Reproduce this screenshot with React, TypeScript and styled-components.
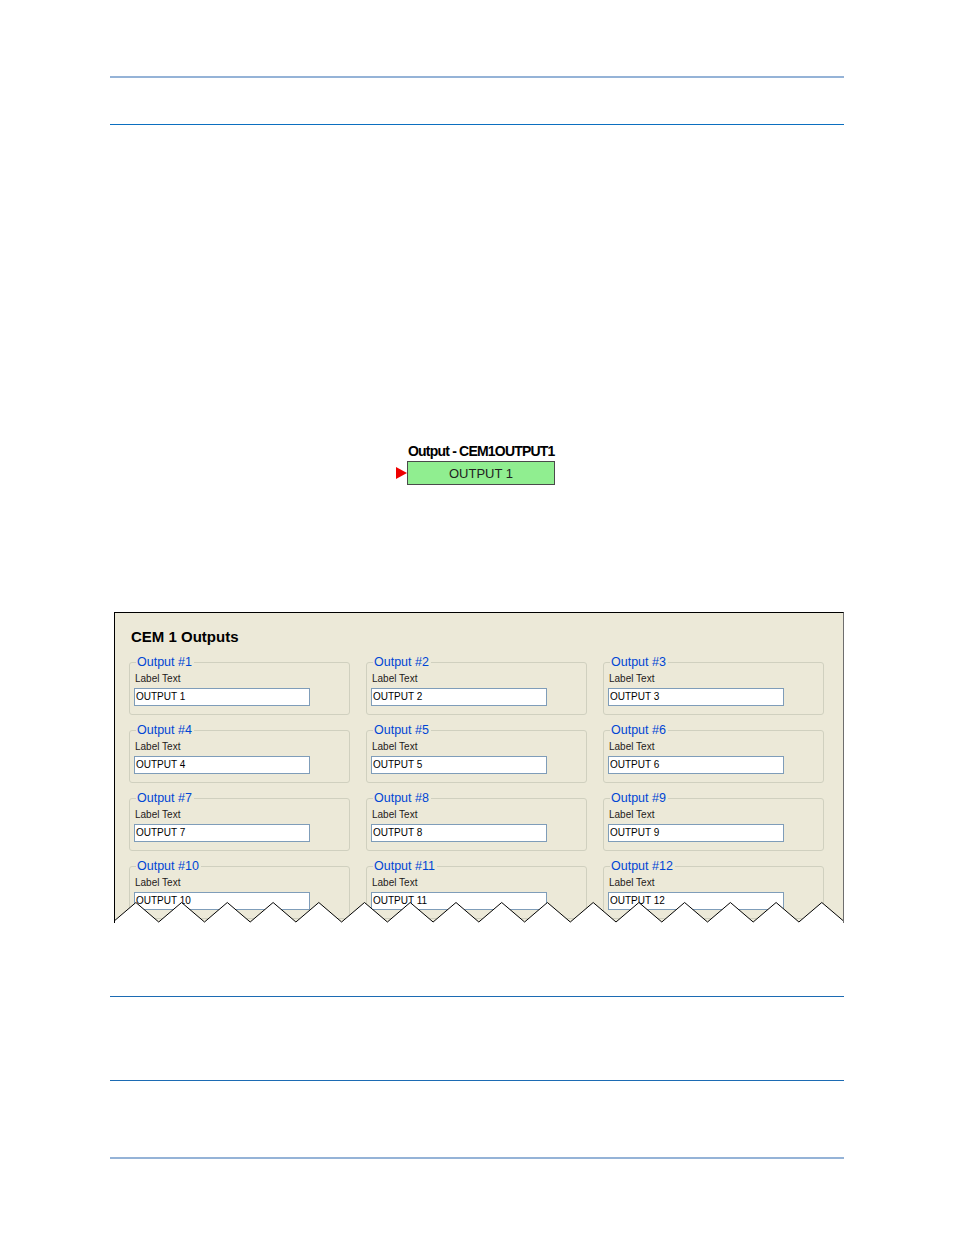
import React from 'react';
import styled, { createGlobalStyle } from 'styled-components';

const GlobalStyle = createGlobalStyle`
  html, body {
    margin: 0;
    padding: 0;
    background: #ffffff;
  }
  body {
    font-family: 'Liberation Sans', Arial, sans-serif;
  }
`;

const Page = styled.div`
  width: 954px;
  height: 1235px;
  padding: 76px 110px 0 110px;
  box-sizing: border-box;
`;

const Rule = styled.div<{ thick?: boolean; tone: string; gap: number }>`
  height: ${({ thick }) => (thick ? '2px' : '1px')};
  background: ${({ tone }) => tone};
  margin-top: ${({ gap }) => gap}px;
`;

const Block = styled.div`
  margin: 318px 0 0 286px;
  display: inline-flex;
  flex-direction: column;
`;

const BlockTitle = styled.div`
  padding-left: 12px;
  font-size: 14px;
  line-height: 16px;
  font-weight: 700;
  letter-spacing: -0.8px;
  color: #000;
  white-space: nowrap;
`;

const BlockRow = styled.div`
  display: flex;
  align-items: center;
  margin-top: 2px;
`;

const Marker = styled.div`
  width: 0;
  height: 0;
  border-top: 6px solid transparent;
  border-bottom: 6px solid transparent;
  border-left: 11px solid #ee0000;
`;

const OutputBox = styled.div`
  width: 148px;
  height: 24px;
  box-sizing: border-box;
  background: #90ee90;
  border: 1px solid #4a4a4a;
  display: flex;
  align-items: center;
  justify-content: center;
  font-size: 13px;
  color: #222;
`;

const Panel = styled.div`
  position: relative;
  margin: 127px 0 0 4px;
  width: 730px;
  height: 311px;
  box-sizing: border-box;
  background: #ece9d8;
  border-top: 1px solid #000;
  border-left: 1px solid #000;
  border-right: 1px solid #6e6e6e;
  padding: 15px 0 0 14px;
  overflow: hidden;
`;

const PanelTitle = styled.div`
  padding-left: 2px;
  font-size: 15px;
  line-height: 18px;
  font-weight: 700;
  color: #000;
`;

const Grid = styled.div`
  margin-top: 9px;
  display: grid;
  grid-template-columns: repeat(3, 221px);
  column-gap: 16px;
  row-gap: 8px;
`;

const Group = styled.fieldset`
  margin: 0;
  padding: 0 5px 8px 5px;
  border: 1px solid #d0d0bf;
  border-radius: 3px;
  min-width: 0;
`;

const Legend = styled.legend`
  margin-left: 1px;
  padding: 0 2px 0 1px;
  font-size: 12.5px;
  line-height: 14px;
  color: #0046d5;
`;

const FieldLabel = styled.div`
  margin-top: 4px;
  font-size: 10px;
  line-height: 12px;
  color: #1e1a1a;
`;

const TextInput = styled.div`
  margin: 3px 0 0 -1px;
  width: 176px;
  height: 18px;
  box-sizing: border-box;
  background: #fff;
  border: 1px solid #7f9db9;
  padding-left: 1px;
  font-size: 10px;
  line-height: 16px;
  color: #000;
`;

const TornEdge = styled.svg`
  position: absolute;
  left: -1px;
  bottom: 0;
  display: block;
`;

const outputs = Array.from({ length: 12 }, (_, i) => i + 1);

function zigzag() {
  const pts: string[] = [];
  const period = 45.73;
  const start = -1;
  for (let k = 0; k <= 16; k++) {
    const vx = start + k * period;
    pts.push(`${vx.toFixed(1)},23`);
    pts.push(`${(vx + period / 2).toFixed(1)},3.5`);
  }
  return pts;
}

const App: React.FC = () => {
  const pts = zigzag();
  return (
    <>
      <GlobalStyle />
      <Page>
        <Rule thick tone="#95b3d7" gap={0} />
        <Rule tone="#0b6fc0" gap={46} />

        <Block>
          <BlockTitle>Output - CEM1OUTPUT1</BlockTitle>
          <BlockRow>
            <Marker />
            <OutputBox>OUTPUT 1</OutputBox>
          </BlockRow>
        </Block>

        <Panel>
          <PanelTitle>CEM 1 Outputs</PanelTitle>
          <Grid>
            {outputs.map((n) => (
              <Group key={n}>
                <Legend>Output #{n}</Legend>
                <FieldLabel>Label Text</FieldLabel>
                <TextInput>OUTPUT {n}</TextInput>
              </Group>
            ))}
          </Grid>
          <TornEdge width="732" height="24" viewBox="0 0 732 24">
            <polygon points={`${pts.join(' ')} 732,24 0,24`} fill="#fff" />
            <polyline points={pts.join(' ')} fill="none" stroke="#000" strokeWidth="1" />
          </TornEdge>
        </Panel>

        <Rule tone="#1c6bb3" gap={73} />
        <Rule tone="#1c6bb3" gap={83} />
        <Rule thick tone="#95b3d7" gap={76} />
      </Page>
    </>
  );
};

export default App;
